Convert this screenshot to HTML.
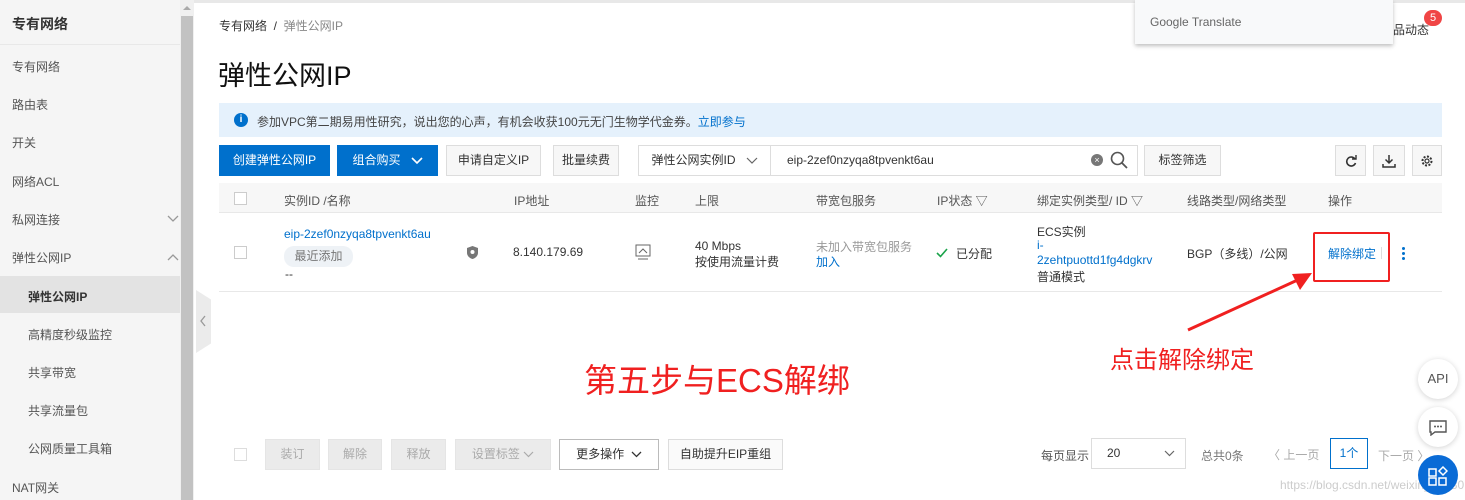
<!DOCTYPE html><html><head><meta charset="utf-8"><style>
*{margin:0;padding:0;box-sizing:border-box}
body{width:1465px;height:500px;overflow:hidden;background:#fff;font-family:"Liberation Sans","Noto Sans CJK SC",sans-serif;font-size:12px;color:#333;position:relative}
.a{position:absolute;white-space:nowrap}
.side{position:absolute;left:0;top:0;width:180px;height:500px;background:#f5f5f5}
.si{position:absolute;left:12px;font-size:12px;color:#555}
.sub{left:28px}
.btn{position:absolute;top:145px;height:31px;border:1px solid #ddd;background:#f7f7f7;line-height:29px;text-align:center;font-size:12px;color:#333}
.pb{background:#0070cc;color:#fff;border-color:#0070cc}
.th{position:absolute;top:192px;color:#555}
.bb{position:absolute;top:439px;height:31px;line-height:29px;text-align:center;background:#ebebeb;color:#aaa;border:1px solid #e5e5e5}
.blue{color:#0070cc}
.fab{position:absolute;left:1418px;width:40px;height:40px;border-radius:50%;background:#fff;box-shadow:0 1px 6px rgba(0,0,0,.18);text-align:center;line-height:40px}
.chev{display:inline-block;vertical-align:middle}
</style></head><body>
<div class="a" style="left:0;top:0;width:1465px;height:3px;background:#e8e8e8"></div>
<div class="a" style="left:0;top:0;width:135px;height:3px;background:#f08a3c"></div>
<div class="side">
<div class="si" style="top:14px;font-size:14px;font-weight:bold;color:#333">专有网络</div>
<div class="a" style="left:0;top:44px;width:180px;height:1px;background:#e8e8e8"></div>
<div class="si" style="top:58px">专有网络</div>
<div class="si" style="top:96px">路由表</div>
<div class="si" style="top:134px">开关</div>
<div class="si" style="top:173px">网络ACL</div>
<div class="si" style="top:211px">私网连接</div>
<div class="si" style="top:249px">弹性公网IP</div>
<svg class="a" style="left:167px;top:215px" width="12" height="8"><path d="M1 1l5 5 5-5" fill="none" stroke="#999" stroke-width="1.3"/></svg>
<svg class="a" style="left:167px;top:253px" width="12" height="8"><path d="M1 7l5-5 5 5" fill="none" stroke="#999" stroke-width="1.3"/></svg>
<div class="a" style="left:0;top:276px;width:180px;height:37px;background:#e3e3e3"></div>
<div class="si sub" style="top:288px;font-weight:bold;color:#333">弹性公网IP</div>
<div class="si sub" style="top:326px">高精度秒级监控</div>
<div class="si sub" style="top:364px">共享带宽</div>
<div class="si sub" style="top:402px">共享流量包</div>
<div class="si sub" style="top:440px">公网质量工具箱</div>
<div class="si" style="top:479px">NAT网关</div>
</div>
<div class="a" style="left:180px;top:0;width:14px;height:500px;background:#f0f0f0"></div>
<div class="a" style="left:181px;top:16px;width:12px;height:484px;background:#c2c2c2"></div>
<div class="a" style="left:183px;top:6px;width:0;height:0;border:4px solid transparent;border-bottom-color:#aaa;border-top:0"></div>
<div class="a" style="left:196px;top:290px;width:15px;height:63px;background:#ebebeb;clip-path:polygon(0 0,100% 15%,100% 85%,0 100%)"></div>
<svg class="a" style="left:199px;top:315px" width="8" height="12"><path d="M6 1L2 6l4 5" fill="none" stroke="#999" stroke-width="1.3"/></svg>

<div class="a" style="left:219px;top:17px;color:#333">专有网络 &nbsp;/&nbsp; <span style="color:#888">弹性公网IP</span></div>
<div class="a" style="left:218px;top:54px;font-size:27px;color:#111">弹性公网IP</div>
<div class="a" style="left:219px;top:103px;width:1223px;height:34px;background:#e5f1fc"></div>
<div class="a" style="left:234px;top:113px;width:14px;height:14px;border-radius:50%;background:#0070cc;color:#fff;font-size:10px;font-weight:bold;text-align:center;line-height:14px">i</div>
<div class="a" style="left:257px;top:113px;color:#444">参加VPC第二期易用性研究，说出您的心声，有机会收获100元无门生物学代金券。<span class="blue">立即参与</span></div>

<div class="a" style="left:1135px;top:0;width:258px;height:44px;background:#f8f9fa;box-shadow:0 2px 4px rgba(0,0,0,.25)"></div>
<div class="a" style="left:1150px;top:15px;color:#666;font-size:12px">Google Translate</div>
<div class="a" style="left:1393px;top:21px;color:#333">品动态</div>
<div class="a" style="left:1424px;top:10px;width:18px;height:16px;border-radius:8px;background:#f04545;color:#fff;text-align:center;font-size:11px;line-height:16px">5</div>

<div class="btn pb" style="left:219px;width:111px">创建弹性公网IP</div>
<div class="btn pb" style="left:337px;width:101px">组合购买 &nbsp;&nbsp;<svg class="chev" width="12" height="8"><path d="M1 1l5 5 5-5" fill="none" stroke="#fff" stroke-width="1.6"/></svg></div>
<div class="btn" style="left:446px;width:95px">申请自定义IP</div>
<div class="btn" style="left:553px;width:66px">批量续费</div>
<div class="btn" style="left:638px;width:133px;background:#fff">弹性公网实例ID &nbsp;&nbsp;<svg class="chev" width="12" height="8"><path d="M1 1l5 5 5-5" fill="none" stroke="#666" stroke-width="1.2"/></svg></div>
<div class="btn" style="left:770px;width:368px;background:#fff;text-align:left;padding-left:16px">eip-2zef0nzyqa8tpvenkt6au</div>
<div class="a" style="left:1091px;top:154px;width:12px;height:12px;border-radius:50%;background:#777;color:#fff;font-size:9px;text-align:center;line-height:12px">×</div>
<svg class="a" style="left:1110px;top:151px" width="18" height="18"><circle cx="7.5" cy="7.5" r="6" fill="none" stroke="#555" stroke-width="1.6"/><line x1="12" y1="12" x2="17" y2="17" stroke="#555" stroke-width="1.8"/></svg>
<div class="btn" style="left:1144px;width:77px">标签筛选</div>
<div class="btn" style="left:1335px;width:31px"><svg class="chev" width="12" height="12"><path d="M10 4A4.5 4.5 0 1 0 10.5 8" fill="none" stroke="#333" stroke-width="1.6"/><path d="M7 4h4V0" fill="none" stroke="#333" stroke-width="1.4"/></svg></div>
<div class="btn" style="left:1373px;width:32px"><svg class="chev" width="14" height="14"><path d="M7 1v8M3.5 5.5L7 9l3.5-3.5M1 10v3h12v-3" fill="none" stroke="#333" stroke-width="1.5"/></svg></div>
<div class="btn" style="left:1412px;width:30px"><svg class="chev" width="14" height="14"><circle cx="7" cy="7" r="4.5" fill="none" stroke="#333" stroke-width="2" stroke-dasharray="2 1.5"/><circle cx="7" cy="7" r="2" fill="none" stroke="#333" stroke-width="1.2"/></svg></div>

<div class="a" style="left:219px;top:183px;width:1223px;height:30px;background:#f7f7f7;border-bottom:1px solid #e8e8e8"></div>
<div class="a" style="left:234px;top:192px;width:13px;height:13px;border:1px solid #ccc;background:#fff"></div>
<div class="th" style="left:284px">实例ID /名称</div>
<div class="th" style="left:514px">IP地址</div>
<div class="th" style="left:635px">监控</div>
<div class="th" style="left:695px">上限</div>
<div class="th" style="left:816px">带宽包服务</div>
<div class="th" style="left:937px">IP状态 ▽</div>
<div class="th" style="left:1037px">绑定实例类型/ ID ▽</div>
<div class="th" style="left:1187px">线路类型/网络类型</div>
<div class="th" style="left:1328px">操作</div>

<div class="a" style="left:234px;top:246px;width:13px;height:13px;border:1px solid #ccc"></div>
<div class="a blue" style="left:284px;top:227px">eip-2zef0nzyqa8tpvenkt6au</div>
<div class="a" style="left:284px;top:246px;width:69px;height:21px;border-radius:10px;background:#eef2f6;color:#777;text-align:center;line-height:21px">最近添加</div>
<div class="a" style="left:285px;top:267px">--</div>
<svg class="a" style="left:467px;top:246px" width="11" height="13"><path d="M5.5 0L11 2v5c0 3-3 5.5-5.5 6C3 12.5 0 10 0 7V2z" fill="#777"/><circle cx="5.5" cy="6" r="2" fill="#fff"/></svg>
<div class="a" style="left:513px;top:245px">8.140.179.69</div>
<svg class="a" style="left:635px;top:244px" width="16" height="16"><rect x="1" y="1" width="14" height="11" fill="none" stroke="#666"/><path d="M4 9l4-4 4 4" fill="none" stroke="#666"/><line x1="3" y1="15" x2="13" y2="15" stroke="#666"/></svg>
<div class="a" style="left:695px;top:239px">40 Mbps</div>
<div class="a" style="left:695px;top:253px">按使用流量计费</div>
<div class="a" style="left:816px;top:238px;color:#999">未加入带宽包服务</div>
<div class="a blue" style="left:816px;top:253px">加入</div>
<svg class="a" style="left:936px;top:248px" width="12" height="10"><path d="M1 5l3.5 3.5L11 1" fill="none" stroke="#1aa34a" stroke-width="1.6"/></svg>
<div class="a" style="left:956px;top:245px">已分配</div>
<div class="a" style="left:1037px;top:223px">ECS实例</div>
<div class="a blue" style="left:1037px;top:238px">i-</div>
<div class="a blue" style="left:1037px;top:253px">2zehtpuottd1fg4dgkrv</div>
<div class="a" style="left:1037px;top:268px">普通模式</div>
<div class="a" style="left:1187px;top:245px">BGP（多线）/公网</div>
<div class="a blue" style="left:1328px;top:245px">解除绑定</div>
<div class="a" style="left:1381px;top:247px;width:1px;height:12px;background:#ddd"></div>
<div class="a" style="left:1402px;top:247px;width:3px;height:3px;border-radius:50%;background:#0070cc;box-shadow:0 5px 0 #0070cc,0 10px 0 #0070cc"></div>
<div class="a" style="left:1313px;top:232px;width:77px;height:50px;border:2px solid #f02020;border-radius:2px"></div>
<div class="a" style="left:219px;top:291px;width:1223px;height:1px;background:#e8e8e8"></div>

<svg class="a" style="left:1180px;top:268px" width="140" height="70"><line x1="8" y1="62" x2="122" y2="10" stroke="#f02020" stroke-width="3"/><polygon points="132,5 112,6 120,22" fill="#f02020"/></svg>
<div class="a" style="left:1110px;top:340px;font-size:24px;color:#f02020">点击解除绑定</div>
<div class="a" style="left:584px;top:354px;font-size:33px;color:#f02020">第五步与ECS解绑</div>

<div class="a" style="left:234px;top:448px;width:13px;height:13px;border:1px solid #ddd"></div>
<div class="bb" style="left:265px;width:55px">装订</div>
<div class="bb" style="left:328px;width:54px">解除</div>
<div class="bb" style="left:391px;width:55px">释放</div>
<div class="bb" style="left:455px;width:96px">设置标签 <svg class="chev" width="11" height="7"><path d="M1 1l4.5 4.5L10 1" fill="none" stroke="#aaa" stroke-width="1.2"/></svg></div>
<div class="bb" style="left:559px;width:100px;background:#fff;color:#333;border-color:#bbb">更多操作 &nbsp;<svg class="chev" width="11" height="7"><path d="M1 1l4.5 4.5L10 1" fill="none" stroke="#333" stroke-width="1.3"/></svg></div>
<div class="bb" style="left:668px;width:115px;background:#fafafa;color:#333;border-color:#ddd">自助提升EIP重组</div>
<div class="a" style="left:1041px;top:447px;color:#555">每页显示</div>
<div class="a" style="left:1091px;top:438px;width:95px;height:31px;border:1px solid #ddd;padding-left:15px;line-height:29px">20<svg style="position:absolute;right:10px;top:11px" width="11" height="7"><path d="M1 1l4.5 4.5L10 1" fill="none" stroke="#666" stroke-width="1.2"/></svg></div>
<div class="a" style="left:1201px;top:447px;color:#777">总共0条</div>
<div class="a" style="left:1268px;top:446px;color:#aaa">〈 上一页</div>
<div class="a" style="left:1330px;top:438px;width:38px;height:31px;border:1px solid #0070cc;color:#0070cc;text-align:center;line-height:29px">1个</div>
<div class="a" style="left:1378px;top:447px;color:#aaa">下一页 〉</div>
<div class="a" style="left:1280px;top:478px;color:#ccc;font-size:12px">https://blog.csdn.net/weixin_45480174</div>
<div class="fab" style="top:359px;font-size:13px;color:#555">API</div>
<div class="fab" style="top:407px;color:#555">
<svg width="18" height="16" style="vertical-align:middle"><path d="M1 1h16v11H6l-4 3v-3H1z" fill="none" stroke="#555" stroke-width="1.4"/><circle cx="6" cy="6.5" r="1" fill="#555"/><circle cx="9" cy="6.5" r="1" fill="#555"/><circle cx="12" cy="6.5" r="1" fill="#555"/></svg></div>
<div class="fab" style="top:455px;background:#0a6bd6;box-shadow:none">
<svg width="20" height="20" style="vertical-align:middle"><rect x="1" y="3" width="7" height="7" fill="none" stroke="#fff" stroke-width="1.5"/><path d="M15 1l4 4-4 4-4-4z" fill="none" stroke="#fff" stroke-width="1.5"/><rect x="1" y="12" width="7" height="7" fill="none" stroke="#fff" stroke-width="1.5"/><rect x="11" y="12" width="7" height="7" fill="none" stroke="#fff" stroke-width="1.5"/></svg></div>
</body></html>
